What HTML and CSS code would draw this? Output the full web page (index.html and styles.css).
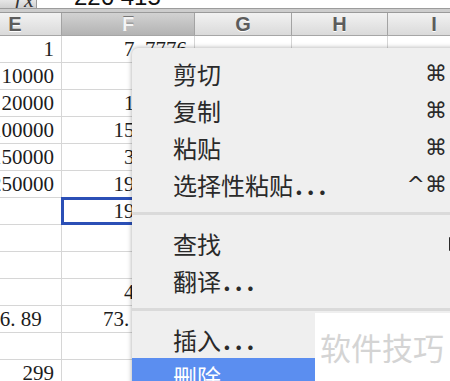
FILE: index.html
```html
<!DOCTYPE html>
<html>
<head>
    <meta charset="utf-8">
    <title>右键菜单</title>
    <link rel="stylesheet" href="styles.css">
</head>
<body>
    <div class="formula-bar">
        <div class="fx">ƒx</div>
        <div class="formula-input">226 415</div>
    </div>
    <div class="bar-gap"></div>

    <div class="grid">
        <div class="col-heads">
            <div class="col-head">E</div>
            <div class="col-head col-head-active">F</div>
            <div class="col-head">G</div>
            <div class="col-head">H</div>
            <div class="col-head">I</div>
        </div>

        <div class="row"><div class="cell">1</div><div class="cell">7. 7776</div><div class="cell"></div><div class="cell"></div><div class="cell"></div></div>
        <div class="row"><div class="cell">10000</div><div class="cell">7776</div><div class="cell"></div><div class="cell"></div><div class="cell"></div></div>
        <div class="row"><div class="cell">20000</div><div class="cell">15. 552</div><div class="cell"></div><div class="cell"></div><div class="cell"></div></div>
        <div class="row"><div class="cell">100000</div><div class="cell">155. 520</div><div class="cell"></div><div class="cell"></div><div class="cell"></div></div>
        <div class="row"><div class="cell">150000</div><div class="cell">38. 880</div><div class="cell"></div><div class="cell"></div><div class="cell"></div></div>
        <div class="row"><div class="cell">250000</div><div class="cell">194. 400</div><div class="cell"></div><div class="cell"></div><div class="cell"></div></div>
        <div class="row"><div class="cell"></div><div class="cell cell-selected">194. 400</div><div class="cell"></div><div class="cell"></div><div class="cell"></div></div>
        <div class="row"><div class="cell"></div><div class="cell"></div><div class="cell"></div><div class="cell"></div><div class="cell"></div></div>
        <div class="row"><div class="cell"></div><div class="cell"></div><div class="cell"></div><div class="cell"></div><div class="cell"></div></div>
        <div class="row"><div class="cell"></div><div class="cell">46. 656</div><div class="cell"></div><div class="cell"></div><div class="cell"></div></div>
        <div class="row"><div class="cell cell-indent">1106. 89</div><div class="cell">73. 32875</div><div class="cell"></div><div class="cell"></div><div class="cell"></div></div>
        <div class="row"><div class="cell"></div><div class="cell"></div><div class="cell"></div><div class="cell"></div><div class="cell"></div></div>
        <div class="row"><div class="cell">299</div><div class="cell"></div><div class="cell"></div><div class="cell"></div><div class="cell"></div></div>
    </div>

    <!-- 右键菜单 -->
    <div class="context-menu">
        <div class="menu-item"><span>剪切</span><span class="shortcut">⌘</span></div>
        <div class="menu-item"><span>复制</span><span class="shortcut">⌘</span></div>
        <div class="menu-item"><span>粘贴</span><span class="shortcut">⌘</span></div>
        <div class="menu-item"><span>选择性粘贴<span class="dots">...</span></span><span class="shortcut">^⌘</span></div>
        <div class="menu-sep"></div>
        <div class="menu-item"><span>查找</span><span class="submenu-arrow"></span></div>
        <div class="menu-item"><span>翻译<span class="dots">...</span></span></div>
        <div class="menu-sep"></div>
        <div class="menu-item"><span>插入<span class="dots">...</span></span></div>
        <div class="menu-item menu-item-active"><span>删除</span></div>
    </div>

    <div class="watermark">软件技巧</div>
</body>
</html>
```

FILE: styles.css
```css
body {
    margin: 0;
    width: 450px;
    height: 381px;
    overflow: hidden;
    position: relative;
    background: #fff;
    font-family: "Liberation Serif", serif;
}

/* 公式栏，只露出下半截 */
.formula-bar {
    display: flex;
    height: 8px;
    overflow: hidden;
    border-bottom: 1px solid #9c9c9c;
    line-height: 0;
}
.fx {
    width: 37px;
    flex: none;
    box-sizing: border-box;
    padding-left: 13px;
    background: linear-gradient(#e6e6e6, #d0d0d0);
    border-right: 1px solid #9a9a9a;
    font-style: italic;
    font-size: 22px;
    color: #333;
}
.formula-input {
    flex: 1;
    margin-top: -3px;
    padding-left: 37px;
    font-family: "Liberation Sans", sans-serif;
    font-size: 24px;
    color: #111;
}
.bar-gap {
    height: 3px;
    background: #cdcdcd;
}

/* 表格 */
.grid {
    margin-left: -31px;
    width: 512px;
}
.col-heads,
.row {
    display: grid;
    grid-template-columns: 93px 133px 97px 96px 93px;
}
.col-heads {
    height: 22px;
    border-top: 1px solid #9a9a9a;
    border-bottom: 1px solid #a6a6a6;
}
.col-head {
    border-right: 1px solid #a3a3a3;
    background: linear-gradient(#f2f2f2, #dadada);
    text-align: center;
    font: bold 20px/22px "Liberation Sans", sans-serif;
    color: #5c5c5c;
    text-shadow: 0 1px 0 #fff;
}
.col-head-active {
    background: linear-gradient(#d2d2d2, #b3b3b3);
    color: #f4f4f4;
    text-shadow: 0 -1px 0 #777;
}
.row {
    height: 26px;
    border-bottom: 1px solid #d6d6d6;
}
.cell {
    border-right: 1px solid #d6d6d6;
    padding-right: 7px;
    text-align: right;
    font-size: 21px;
    line-height: 26px;
    color: #1c1c1c;
    white-space: nowrap;
    overflow: hidden;
}
.cell-indent {
    padding-right: 20px;
}
.cell-selected {
    outline: 3px solid #2b4fb6;
    outline-offset: -2px;
}

/* 右键菜单 */
.context-menu {
    position: absolute;
    left: 132px;
    top: 48px;
    width: 330px;
    height: 360px;
    padding-top: 7px;
    box-sizing: border-box;
    background: #efefef;
    border-radius: 6px 0 0 0;
    box-shadow: 0 0 5px rgba(0, 0, 0, 0.35);
    font-family: "Noto Sans CJK SC", sans-serif;
    font-size: 24px;
    color: #2a2a2a;
}
.menu-item {
    display: flex;
    align-items: center;
    justify-content: space-between;
    height: 37px;
    padding: 0 15px 0 41px;
}
.menu-item-active {
    background: #5b8ef0;
    color: #fff;
}
.menu-sep {
    height: 3px;
    margin: 9px 0 10px;
    background: #dadada;
}
.dots {
    letter-spacing: 4px;
    margin-left: 2px;
    font-weight: bold;
}
.shortcut {
    font-family: "DejaVu Sans", sans-serif;
    font-size: 22px;
    color: #2a2a2a;
}
.submenu-arrow {
    width: 0;
    height: 0;
    margin-right: -14px;
    border-left: 12px solid #2a2a2a;
    border-top: 7px solid transparent;
    border-bottom: 7px solid transparent;
}

/* 水印 */
.watermark {
    position: absolute;
    left: 315px;
    top: 313px;
    width: 135px;
    height: 68px;
    box-sizing: border-box;
    padding-left: 5px;
    background: #fff;
    color: #d4d4d4;
    font: 31px/68px "Noto Sans CJK SC", sans-serif;
    white-space: nowrap;
}
```
